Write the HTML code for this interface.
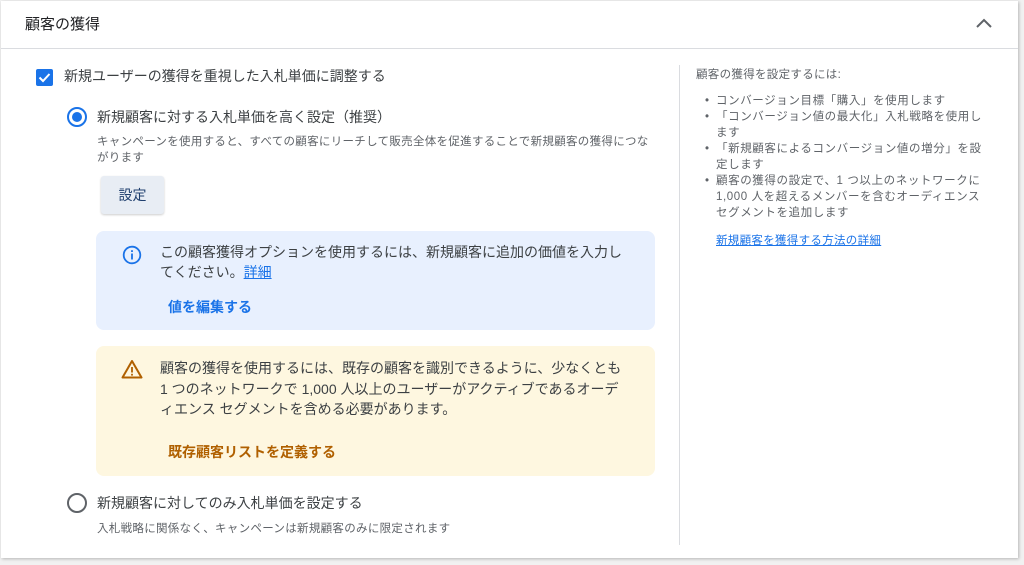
<!DOCTYPE html>
<html><head><meta charset="utf-8"><style>
*{margin:0;padding:0;box-sizing:border-box}
body{width:1024px;height:565px;background:#f1f1f1;font-family:"Liberation Sans","Noto Sans CJK JP",sans-serif;position:relative;overflow:hidden;color:#3c4043}
.card{position:absolute;left:1px;top:1px;width:1017px;height:557px;background:#fff;box-shadow:1px 1px 3px rgba(0,0,0,.25)}
.a{position:absolute;white-space:nowrap}
.t14{font-size:14px;color:#3c4043}
.t12{font-size:11.5px;color:#5f6368;letter-spacing:.3px}
</style></head><body>
<div class="card"></div>
<div class="a" style="left:25px;top:13px;font-size:15px;color:#202124">顧客の獲得</div>
<svg class="a" style="left:975px;top:17px" width="18" height="12"><path d="M2 10 L9 3 L16 10" stroke="#5f6368" stroke-width="2" fill="none"/></svg>
<div class="a" style="left:1px;top:48px;width:1017px;height:1px;background:#dadce0"></div>

<div class="a" style="left:36px;top:69px;width:17px;height:17px;background:#1a73e8;border-radius:2px"></div>
<svg class="a" style="left:36px;top:69px" width="17" height="17"><path d="M3.5 8.5 L7 12 L13.5 5" stroke="#fff" stroke-width="2" fill="none"/></svg>
<div class="a t14" style="left:64px;top:66px">新規ユーザーの獲得を重視した入札単価に調整する</div>

<div class="a" style="left:67px;top:107px;width:20px;height:20px;border:2px solid #1a73e8;border-radius:50%"></div>
<div class="a" style="left:72px;top:112px;width:10px;height:10px;background:#1a73e8;border-radius:50%"></div>
<div class="a t14" style="left:97px;top:107px">新規顧客に対する入札単価を高く設定（推奨）</div>
<div class="a t12" style="left:97px;top:134px;line-height:16px;white-space:normal;width:560px">キャンペーンを使用すると、すべての顧客にリーチして販売全体を促進することで新規顧客の獲得につながります</div>
<div class="a" style="left:101px;top:176px;width:63px;height:38px;background:#e8edf4;border-radius:3px;box-shadow:0 1px 2px rgba(0,0,0,.2);font-size:14px;color:#1f3f6e;text-align:center;line-height:38px">設定</div>

<div class="a" style="left:96px;top:231px;width:559px;height:99px;background:#e8f0fe;border-radius:8px"></div>
<svg class="a" style="left:122px;top:245px" width="20" height="20"><circle cx="10" cy="10" r="8.3" stroke="#1a73e8" stroke-width="1.8" fill="none"/><rect x="9.1" y="8.5" width="1.8" height="6" fill="#1a73e8"/><rect x="9.1" y="5.2" width="1.8" height="1.8" fill="#1a73e8"/></svg>
<div class="a t14" style="left:160px;top:242px;line-height:20px">この顧客獲得オプションを使用するには、新規顧客に追加の価値を入力し<br>てください。<span style="color:#1a73e8;text-decoration:underline">詳細</span></div>
<div class="a" style="left:168px;top:297px;font-size:14px;font-weight:bold;color:#1a73e8">値を編集する</div>

<div class="a" style="left:96px;top:346px;width:559px;height:130px;background:#fef7e0;border-radius:8px"></div>
<svg class="a" style="left:121px;top:359px" width="22" height="20"><path d="M11 2 L20.5 18.5 L1.5 18.5 Z" stroke="#b06000" stroke-width="2" fill="none" stroke-linejoin="round"/><rect x="10.1" y="8" width="1.8" height="5.5" fill="#b06000"/><rect x="10.1" y="14.8" width="1.8" height="1.8" fill="#b06000"/></svg>
<div class="a t14" style="left:160px;top:358px;line-height:20.5px">顧客の獲得を使用するには、既存の顧客を識別できるように、少なくとも<br>1 つのネットワークで 1,000 人以上のユーザーがアクティブであるオーデ<br>ィエンス セグメントを含める必要があります。</div>
<div class="a" style="left:168px;top:442px;font-size:14px;font-weight:bold;color:#b06000">既存顧客リストを定義する</div>

<div class="a" style="left:67px;top:493px;width:20px;height:20px;border:2px solid #5f6368;border-radius:50%"></div>
<div class="a t14" style="left:97px;top:493px">新規顧客に対してのみ入札単価を設定する</div>
<div class="a t12" style="left:97px;top:520px">入札戦略に関係なく、キャンペーンは新規顧客のみに限定されます</div>

<div class="a" style="left:679px;top:65px;width:1px;height:480px;background:#dadce0"></div>
<div class="a t12" style="left:696px;top:66px">顧客の獲得を設定するには:</div>
<div class="a t12" style="left:705px;top:93px;line-height:16px;white-space:normal;width:282px;letter-spacing:.6px">
<div style="position:relative;padding-left:11px"><span style="position:absolute;left:0">•</span>コンバージョン目標「購入」を使用します</div>
<div style="position:relative;padding-left:11px"><span style="position:absolute;left:0">•</span>「コンバージョン値の最大化」入札戦略を使用し<br>ます</div>
<div style="position:relative;padding-left:11px"><span style="position:absolute;left:0">•</span>「新規顧客によるコンバージョン値の増分」を設<br>定します</div>
<div style="position:relative;padding-left:11px"><span style="position:absolute;left:0">•</span>顧客の獲得の設定で、1 つ以上のネットワークに<br>1,000 人を超えるメンバーを含むオーディエンス<br>セグメントを追加します</div>
</div>
<div class="a" style="left:716px;top:232px;font-size:11.5px;letter-spacing:.3px;color:#1a73e8;text-decoration:underline">新規顧客を獲得する方法の詳細</div>
</body></html>
